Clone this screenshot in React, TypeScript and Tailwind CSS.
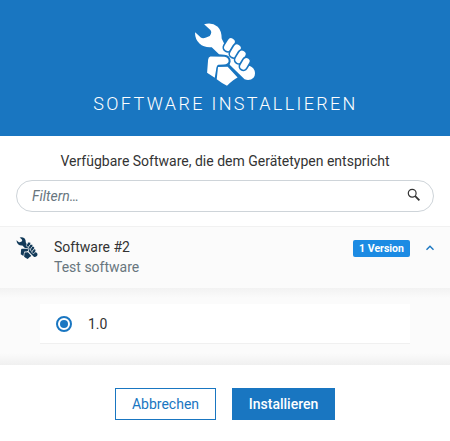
import React from 'react';

function ToolHand({ className }: { className: string }) {
  return (
    <svg viewBox="27 23 186 190" className={className} fill="currentColor" aria-hidden="true">
      <path d="M57 27 Q80 20 98 34 Q110 46 110 70 L118 86 L158 130 L178 155 L189 152 Q202 152 209 166 Q213 179 206 188 Q196 198 179 193 L134 149 L137 139 Q136 120 118 119 L102 117 L80 96 Q57 98 43 85 Q28 70 30 51 L47 67 Q53 71 63 67 L74 62 Q82 52 76 44 Z" />
      <path d="M76 124 L118 125 Q131 127 131 138 Q130 147 116 148 L100 149 Q94 151 93 165 L89 188 L66 173 L69 134 Q70 125 76 124 Z" />
      <path d="M99 156 L128 155 L158 187 Q146 192 126 212 Q110 205 95 193 Z" />
      <g stroke="var(--gap)" strokeWidth="5">
        <rect x="120" y="65" width="27" height="46" rx="13" transform="rotate(31 133 88)" />
        <rect x="138" y="84" width="27" height="46" rx="13" transform="rotate(31 151 107)" />
        <rect x="154" y="103" width="26" height="45" rx="13" transform="rotate(31 167 125)" />
        <rect x="168" y="125" width="24" height="42" rx="12" transform="rotate(31 180 146)" />
      </g>
    </svg>
  );
}

export default function App() {
  return (
    <main className="flex h-[441px] w-[450px] flex-col overflow-hidden bg-white font-['Roboto',sans-serif] text-sm text-[#333]">
      <header className="flex h-[136px] shrink-0 flex-col items-center bg-[#1976c1] pt-[23px] text-white">
        <ToolHand className="h-[63px] w-[62px] [--gap:#1976c1]" />
        <h1 className="mt-[6px] pl-px text-lg leading-6 font-light tracking-[2.35px] whitespace-nowrap">SOFTWARE INSTALLIEREN</h1>
      </header>
      <section className="flex h-[90px] shrink-0 flex-col px-4 pt-[15px]">
        <p className="text-center leading-5 whitespace-nowrap">Verfügbare Software, die dem Gerätetypen entspricht</p>
        <div className="mt-[9px] flex h-8 items-center justify-between rounded-full border border-[#ced4d9] pr-[12px] pl-[15px]">
          <span className="text-[#68767e] italic">Filtern…</span>
          <svg viewBox="0 0 14 14" className="mb-[3px] size-[14px]" fill="none" stroke="#333" aria-hidden="true">
            <circle cx="5.2" cy="5.2" r="3.9" strokeWidth="1.2" />
            <path d="M8.2 8.2 L12.4 12.4" strokeWidth="1.8" />
          </svg>
        </div>
      </section>
      <section className="flex h-[62px] shrink-0 border-t border-[#f1f1f1] bg-[#fbfbfb] pl-4">
        <ToolHand className="mt-[10px] h-[22px] w-[22px] text-[#123a59] [--gap:#fbfbfb]" />
        <div className="mt-[10px] ml-4 leading-5">
          <div>Software #2</div>
          <div className="text-[#68767e]">Test software</div>
        </div>
        <span className="mt-[13px] ml-auto flex h-[17px] w-[57px] items-center justify-center rounded-[2px] bg-[#1c8be3] text-[10.5px] font-bold text-white">1 Version</span>
        <svg viewBox="0 0 10 6" className="mt-[18px] mr-[15px] ml-[15px] h-[6px] w-[10px]" fill="none" stroke="#1976c1" strokeWidth="1.4" aria-hidden="true">
          <path d="M1.5 4.7 L5 1.2 L8.5 4.7" />
        </svg>
      </section>
      <section className="h-[77px] shrink-0 bg-[linear-gradient(to_bottom,#f2f2f2_0,#fbfbfb_10px,#fbfbfb_65px,#f0f0f0_77px)] px-10 pt-4">
        <label className="flex h-10 items-center border-b border-[#f0f0f0] bg-white pl-4">
          <span className="flex size-4 items-center justify-center rounded-full border-2 border-[#1976c1]">
            <span className="size-2 rounded-full bg-[#1976c1]" />
          </span>
          <span className="ml-4">1.0</span>
        </label>
      </section>
      <footer className="flex flex-1 justify-center gap-4 pt-[23px]">
        <button className="h-8 w-[101px] border border-[#1976c1] bg-white pb-px text-[#1976c1]">Abbrechen</button>
        <button className="h-8 w-[103px] bg-[#1976c1] pb-px font-medium text-white">Installieren</button>
      </footer>
    </main>
  );
}
